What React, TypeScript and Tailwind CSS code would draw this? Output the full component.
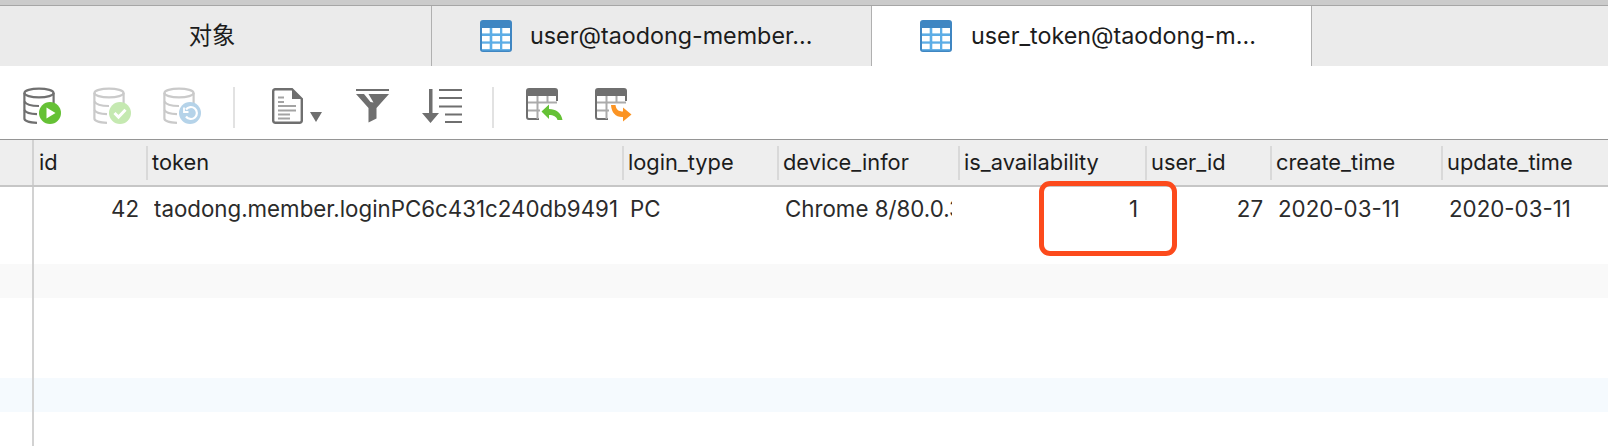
import React from "react";

function Db({ stroke, fill, glyph }: { stroke: string; fill: string; glyph: "play" | "check" | "undo" }) {
  return (
    <svg width="38" height="38" viewBox="0 0 38 38" className="block">
      <g fill="none" stroke={stroke} strokeWidth="2.2">
        <ellipse cx="16" cy="6" rx="14.6" ry="4.4" />
        <path d="M1.4 6V31.5C1.4 34 7 35.6 14 35.8" />
        <path d="M30.6 6V18" />
        <path d="M1.4 14.5C3 17.5 9 19 16 19" />
        <path d="M1.4 23C3 26 8 27 14 27.2" />
      </g>
      <circle cx="27" cy="26" r="11" fill={fill} />
      {glyph === "play" && <path d="M23.5 20.5L32.5 26L23.5 31.5Z" fill="#fff" />}
      {glyph === "check" && <path d="M21.5 26L25.5 30L32.5 22.8" fill="none" stroke="#fff" strokeWidth="3" />}
      {glyph === "undo" && (
        <g fill="none" stroke="#fff" strokeWidth="2.2">
          <path d="M23 22.5A6 6 0 1 1 23 29.5" />
          <path d="M21 20.5V25H25.5" strokeWidth="1.8" />
        </g>
      )}
    </svg>
  );
}

function TabIcon() {
  return (
    <svg width="32" height="32" viewBox="0 0 32 32" className="block shrink-0">
      <rect x="0" y="0" width="32" height="32" rx="3" fill="#3f86c2" />
      <rect x="2" y="8" width="28" height="22.5" fill="#5cade6" />
      {[8, 16, 23.7].map((y) =>
        [2, 12.3, 22.3].map((x) => <rect key={`${x}-${y}`} x={x} y={y} width="7.7" height="5.4" fill="#ffffff" />)
      )}
    </svg>
  );
}

function GridIcon({ children }: { children: React.ReactNode }) {
  return (
    <svg width="37" height="36" viewBox="0 0 37 36" className="block">
      <path d="M3 0H29A3 3 0 0 1 32 3V8H0V3A3 3 0 0 1 3 0Z" fill="#6f6f6f" />
      <path d="M1 7V29A2 2 0 0 0 3 31H13M31 7V13" fill="none" stroke="#6f6f6f" strokeWidth="2" />
      <path d="M2 14.5H31M2 22.5H14M11.5 8V31M21.5 8V15" fill="none" stroke="#ababab" strokeWidth="2" />
      {children}
    </svg>
  );
}

const cols = [
  { w: "w-[113px]", label: "id", value: "42", right: true, pad: "pr-[8px]" },
  { w: "w-[476px]", label: "token", value: "taodong.member.loginPC6c431c240db9491", pad: "pr-0" },
  { w: "w-[155px]", label: "login_type", value: "PC", pad: "pr-[8px]" },
  { w: "w-[181px]", label: "device_infor", value: "Chrome 8/80.0.3", pad: "pr-[7px]" },
  { w: "w-[187px]", label: "is_availability", value: "1", right: true, pad: "pr-[8px]" },
  { w: "w-[125px]", label: "user_id", value: "27", right: true, pad: "pr-[8px]" },
  { w: "w-[171px]", label: "create_time", value: "2020-03-11", pad: "pr-[8px]" },
  { w: "w-[167px]", label: "update_time", value: "2020-03-11", pad: "pr-[8px]" },
];

function Gutter() {
  return <div className="w-[34px] shrink-0 self-stretch border-r-2 border-[#d2d2d2]" />;
}

export default function App() {
  return (
    <div className="relative flex h-[446px] w-[1608px] flex-col overflow-hidden bg-white font-['Inter','Noto_Sans_CJK_SC',sans-serif] text-[#1c1c1c]">
      <div className="h-[5px] shrink-0 bg-[#cbcbcb]" />
      <div className="h-px shrink-0 bg-[#a6a6a6]" />

      <div className="flex h-[60px] shrink-0 bg-[#ebebeb] text-[23.3px]">
        <div className="flex w-[432px] items-center justify-center border-r border-[#b0b0b0] pr-[7px]">对象</div>
        <div className="flex w-[440px] items-center gap-[18px] border-r border-[#b0b0b0] pl-[48px]">
          <TabIcon />
          <span>user@taodong-member...</span>
        </div>
        <div className="flex w-[440px] items-center gap-[19px] border-r border-[#b0b0b0] bg-white pl-[48px]">
          <TabIcon />
          <span>user_token@taodong-m...</span>
        </div>
      </div>

      <div className="flex h-[73px] shrink-0 items-start pl-[23px] pt-[21px]">
        <Db stroke="#707070" fill="#65c135" glyph="play" />
        <div className="ml-[32px]"><Db stroke="#cacaca" fill="#c5e9b1" glyph="check" /></div>
        <div className="ml-[32px]"><Db stroke="#cacaca" fill="#b5d3e9" glyph="undo" /></div>
        <div className="ml-[32px] h-[41px] w-[2px] bg-[#e2e2e2]" />
        <svg width="31" height="36" viewBox="0 0 31 36" className="ml-[37px] mt-px block">
          <path d="M3 1.2H20L29.8 11V32.5A2.2 2.2 0 0 1 27.6 34.8H3.4A2.2 2.2 0 0 1 1.2 32.5V3.4A2.2 2.2 0 0 1 3 1.2Z" fill="#fff" stroke="#6f6f6f" strokeWidth="2.4" />
          <path d="M20 1L30 11H20Z" fill="#6f6f6f" />
          <path d="M6 9.5H12M6 14H12M6 18H24M6 22.5H24M6 26.5H18M6 30.5H18" stroke="#a3a3a3" strokeWidth="2" />
        </svg>
        <svg width="12" height="10" viewBox="0 0 12 10" className="ml-[7px] mt-[25px] block">
          <path d="M0 0H12L6 10Z" fill="#6f6f6f" />
        </svg>
        <svg width="33" height="34" viewBox="0 0 33 34" className="ml-[34px] mt-[2px] block">
          <path d="M0 0H33V2H0Z" fill="#6f6f6f" />
          <path d="M0 5H33L20.5 19V29.5L12.5 33.5V19Z" fill="#6f6f6f" />
          <path d="M8 5H12.5L17.5 13.5L14.5 13Z" fill="#fff" />
        </svg>
        <svg width="41" height="34" viewBox="0 0 41 34" className="ml-[33px] mt-[2px] block">
          <path d="M7 0H10.5V24H17L8.5 34L0 24H7Z" fill="#6f6f6f" />
          <path d="M17 1H40M17 9H40M17 17.5H40M23 25.5H40M23 33H40" stroke="#6f6f6f" strokeWidth="2.2" />
        </svg>
        <div className="ml-[29px] h-[41px] w-[2px] bg-[#e2e2e2]" />
        <div className="ml-[32px] mt-px">
          <GridIcon>
            <path d="M15.5 23.5L23 16.5V21C30 21 35 24.5 36.5 32H31.5C30.5 28.5 27.5 27 23 27V31Z" fill="#65c135" />
          </GridIcon>
        </div>
        <div className="ml-[32px] mt-px">
          <GridIcon>
            <path d="M16 17H20.5C21 21.5 23.5 23.5 28 23.5V19.5L36.5 26.5L28 33.5V29C21 29.5 16.5 25 16 17Z" fill="#fb9424" />
          </GridIcon>
        </div>
      </div>

      <div className="flex h-[48px] shrink-0 border-t border-b-2 border-t-[#959595] border-b-[#c6c6c6] bg-[#eeeeee] text-[21.8px]">
        <Gutter />
        {cols.map((c, i) => (
          <div key={c.label} className={`${c.w} flex shrink-0 items-center justify-between pl-[5px]`}>
            <span className="whitespace-nowrap">{c.label}</span>
            {i < cols.length - 1 && <div className="mr-[-1px] h-[34px] w-[2px] shrink-0 bg-[#d9d9d9]" />}
          </div>
        ))}
      </div>

      <div className="flex h-[77px] shrink-0 text-[22.3px] leading-[43px] text-[#2b2b2b]">
        <Gutter />
        {cols.map((c) => (
          <div key={c.label} className={`${c.w} h-full shrink-0 pl-[7px] ${c.pad}`}>
            <div className={`overflow-hidden whitespace-nowrap ${c.right ? "text-right" : ""}`}>{c.value}</div>
          </div>
        ))}
      </div>
      <div className="flex h-[34px] shrink-0 bg-[#f9f9f9]"><Gutter /></div>
      <div className="flex h-[80px] shrink-0"><Gutter /></div>
      <div className="flex h-[34px] shrink-0 bg-[#f5fafe]"><Gutter /></div>
      <div className="flex min-h-0 flex-1"><Gutter /></div>

      <div className="absolute left-[1039px] top-[181px] h-[75px] w-[138px] rounded-[11px] border-[5px] border-[#fc4a1c]" />
    </div>
  );
}
